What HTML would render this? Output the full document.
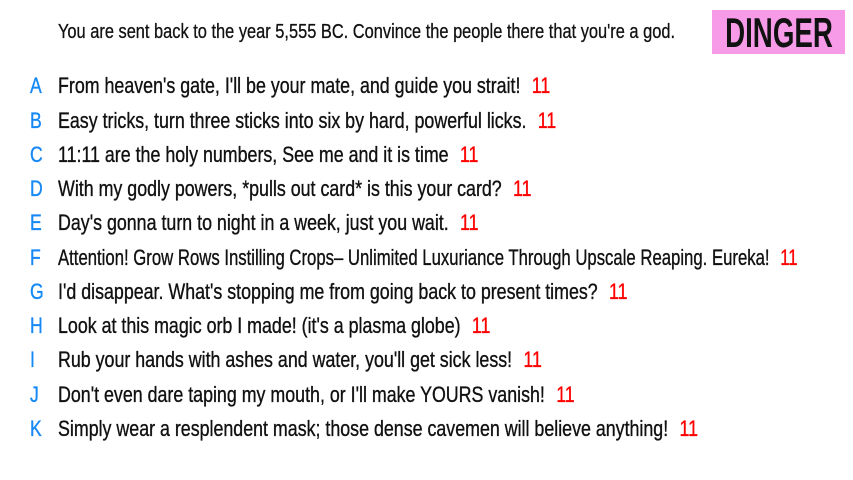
<!DOCTYPE html>
<html><head><meta charset="utf-8"><style>
html,body{margin:0;padding:0;background:#fff;width:853px;height:480px;overflow:hidden}
body{font-family:"Liberation Sans",sans-serif;color:#111;position:relative}
.h{position:absolute;left:58px;top:21px;font-size:20px;white-space:nowrap;transform:scaleX(0.82);transform-origin:0 0;-webkit-text-stroke:0.3px #111}
.d{position:absolute;left:712px;top:10px;width:133px;height:44px;background:#f79be9;overflow:hidden}
.d span{position:absolute;left:50%;top:0;font-size:42px;font-weight:bold;line-height:46px;color:#111;white-space:nowrap;transform:translateX(-50%) scaleX(0.66)}
.r{position:absolute;left:0;height:30px;font-size:22px;white-space:nowrap;line-height:30px;-webkit-text-stroke:0.35px currentColor}
.l{position:absolute;left:30px;color:#1789f5;display:inline-block;transform:scaleX(0.8);transform-origin:0 0}
.t{position:absolute;left:58px;display:inline-block;transform:scaleX(0.81);transform-origin:0 0}
.n{color:#f00;margin-left:14px}
</style></head><body>
<div class="h">You are sent back to the year 5,555 BC. Convince the people there that you're a god.</div>
<div class="d"><span>DINGER</span></div>
<div class="r" style="top:71px"><span class="l">A</span><span class="t">From heaven's gate, I'll be your mate, and guide you strait!<span class="n">11</span></span></div>
<div class="r" style="top:106px"><span class="l">B</span><span class="t">Easy tricks, turn three sticks into six by hard, powerful licks.<span class="n">11</span></span></div>
<div class="r" style="top:140px"><span class="l">C</span><span class="t">11:11 are the holy numbers, See me and it is time<span class="n">11</span></span></div>
<div class="r" style="top:174px"><span class="l">D</span><span class="t">With my godly powers, *pulls out card* is this your card?<span class="n">11</span></span></div>
<div class="r" style="top:208px"><span class="l">E</span><span class="t">Day's gonna turn to night in a week, just you wait.<span class="n">11</span></span></div>
<div class="r" style="top:243px"><span class="l">F</span><span class="t" style="transform:scaleX(0.76)">Attention! Grow Rows Instilling Crops– Unlimited Luxuriance Through Upscale Reaping. Eureka!<span class="n">11</span></span></div>
<div class="r" style="top:277px"><span class="l">G</span><span class="t">I'd disappear. What's stopping me from going back to present times?<span class="n">11</span></span></div>
<div class="r" style="top:311px"><span class="l">H</span><span class="t">Look at this magic orb I made! (it's a plasma globe)<span class="n">11</span></span></div>
<div class="r" style="top:345px"><span class="l">I</span><span class="t">Rub your hands with ashes and water, you'll get sick less!<span class="n">11</span></span></div>
<div class="r" style="top:380px"><span class="l">J</span><span class="t">Don't even dare taping my mouth, or I'll make YOURS vanish!<span class="n">11</span></span></div>
<div class="r" style="top:414px"><span class="l">K</span><span class="t">Simply wear a resplendent mask; those dense cavemen will believe anything!<span class="n">11</span></span></div>
</body></html>
